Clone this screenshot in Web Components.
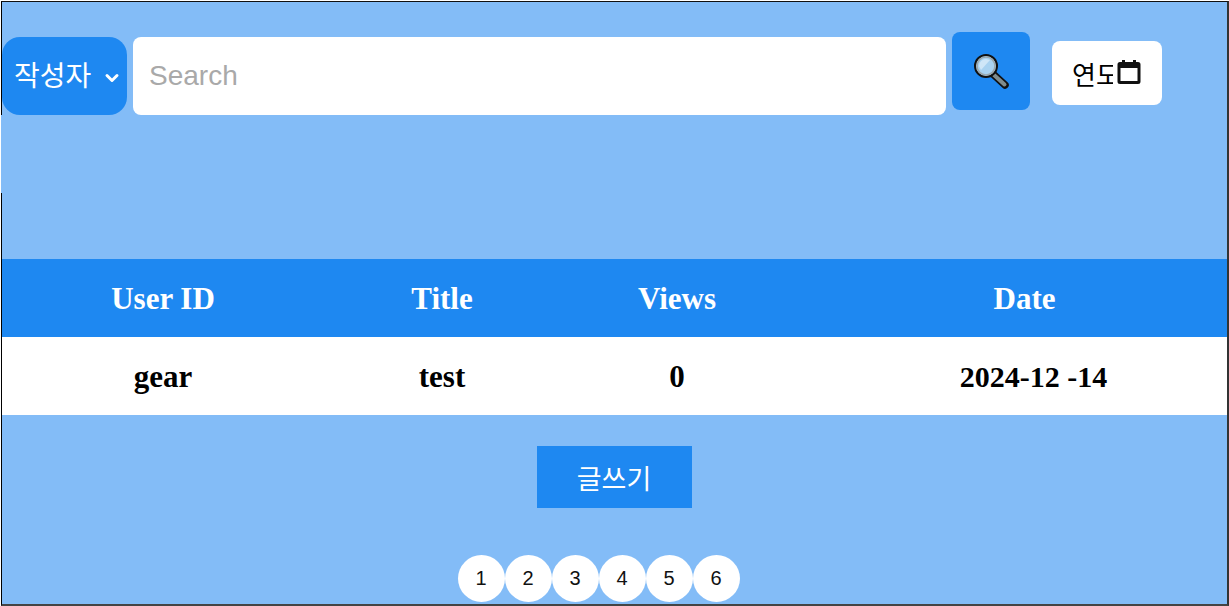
<!DOCTYPE html>
<html lang="ko">
<head>
<meta charset="utf-8">
<title>Board</title>
<style>
  html, body { margin: 0; padding: 0; background: #fff; }
  body { width: 1229px; height: 606px; overflow: hidden; font-family: "Liberation Sans", "Noto Sans CJK KR", sans-serif; }
</style>
</head>
<body>
<board-page>
  <search-bar slot="search"></search-bar>
  <board-table slot="table">
    <table-row head><span>User ID</span><span>Title</span><span>Views</span><span>Date</span></table-row>
    <table-row><span>gear</span><span>test</span><span>0</span><span>2024-12 -14</span></table-row>
  </board-table>
  <write-button slot="write">글쓰기</write-button>
  <page-numbers slot="pages" count="6"></page-numbers>
</board-page>

<script>
class BoardPage extends HTMLElement {
  constructor() {
    super();
    this.attachShadow({ mode: "open" });
    this.shadowRoot.innerHTML = `
      <style>
        :host {
          display: flex;
          flex-direction: column;
          box-sizing: border-box;
          position: relative;
          width: 1228px;
          height: 605px;
          margin: 1px 0 0 1px;
          border-top: 1px solid #111;
          border-left: 1px solid #000;
          border-right: 2px solid #333;
          border-bottom: 2px solid #444;
          background: #83bcf7;
        }
        /* the left edge line is broken in the reference */
        .gap {
          position: absolute;
          left: -1px;
          top: 113px;
          width: 1px;
          height: 78px;
          background: #83bcf7;
        }
        .search { display: block; height: 257px; }
        .write { display: flex; justify-content: center; padding: 31px 1px 0 0; }
        .pages { display: flex; justify-content: center; padding: 47px 32px 0 0; }
      </style>
      <div class="search"><slot name="search"></slot></div>
      <slot name="table"></slot>
      <div class="write"><slot name="write"></slot></div>
      <div class="pages"><slot name="pages"></slot></div>
      <div class="gap"></div>
    `;
  }
}

class SearchBar extends HTMLElement {
  constructor() {
    super();
    this.attachShadow({ mode: "open" });
    this.shadowRoot.innerHTML = `
      <style>
        :host { display: flex; align-items: flex-start; padding-top: 30px; }
        .select {
          box-sizing: border-box;
          display: flex;
          align-items: center;
          width: 125px;
          height: 78px;
          margin: 5px 0 0 0;
          padding: 0 0 4px 12px;
          border-radius: 18px;
          background: #1e88f1;
          color: #fff;
          font: 28px "Noto Sans CJK KR", sans-serif;
          white-space: nowrap;
        }
        .select svg { margin-left: 13px; margin-top: 7px; }
        .input {
          box-sizing: border-box;
          display: flex;
          align-items: center;
          width: 813px;
          height: 78px;
          margin: 5px 0 0 6px;
          padding-left: 16px;
          border-radius: 8px;
          background: #fff;
          color: #a9a9a9;
          font: 28px "Liberation Sans", sans-serif;
        }
        .go {
          display: flex;
          align-items: center;
          justify-content: center;
          width: 78px;
          height: 78px;
          margin-left: 6px;
          border-radius: 8px;
          background: #1e88f1;
        }
        .year {
          box-sizing: border-box;
          display: flex;
          align-items: center;
          width: 110px;
          height: 64px;
          margin: 9px 0 0 22px;
          padding-left: 20px;
          border-radius: 8px;
          background: #fff;
          color: #000;
          font: 26px "Noto Sans CJK KR", sans-serif;
        }
        .year .clip { display: block; width: 41px; overflow: hidden; white-space: nowrap; }
        .year svg { margin-left: 4px; margin-bottom: 2px; flex: none; }
      </style>
      <div class="select">작성자
        <svg width="16" height="16" viewBox="0 0 16 16" fill="none" stroke="#fff" stroke-width="3" stroke-linecap="round" stroke-linejoin="round"><path d="M3 5.500 8 10.500 13 5.500"/></svg>
      </div>
      <div class="input">Search</div>
      <div class="go">
        <svg width="38" height="38" viewBox="0 0 38 38">
          <path d="M21 22 33 33" stroke="#111" stroke-width="7.500" stroke-linecap="round"/>
          <path d="M22 23 32.500 32.500" stroke="#7f8c8d" stroke-width="4" stroke-linecap="round"/>
          <circle cx="14" cy="14" r="11" fill="#a9d2f0" stroke="#111" stroke-width="2"/>
          <circle cx="14" cy="14" r="9" fill="none" stroke="#9aa7ad" stroke-width="1.600"/>
          <path d="M7 14A7 7 0 0 1 14 7L18 8 9 18Z" fill="#cfe6f7"/>
        </svg>
      </div>
      <div class="year">
        <span class="clip">연도</span>
        <svg width="24" height="26" viewBox="0 0 24 26"><path fill="#111" d="M5 1h3v2h8V1h3v2h2a2.500 2.500 0 0 1 2.500 2.500v17a2.500 2.500 0 0 1-2.500 2.500H3a2.500 2.500 0 0 1-2.500-2.500v-17A2.500 2.500 0 0 1 3 3h2zM3.500 9v13h17V9z"/></svg>
      </div>
    `;
  }
}

class BoardTable extends HTMLElement {
  constructor() {
    super();
    this.attachShadow({ mode: "open" });
    this.shadowRoot.innerHTML = `
      <style>
        :host { display: block; }
      </style>
      <slot></slot>
    `;
  }
}

class TableRow extends HTMLElement {
  constructor() {
    super();
    this.attachShadow({ mode: "open" });
    this.shadowRoot.innerHTML = `
      <style>
        :host {
          display: grid;
          grid-template-columns: 322px 236px 234px 1fr;
          align-items: center;
          justify-items: center;
          box-sizing: border-box;
          height: 78px;
          padding-top: 2px;
          background: #fff;
          color: #000;
          font: bold 31px "Liberation Serif", serif;
          --last-pad: 46px;
          --last-size: 30px;
        }
        :host([head]) {
          background: #1e88f1;
          color: #fff;
          --last-pad: 28px;
          --last-size: 31px;
        }
        ::slotted(:last-child) { padding-left: var(--last-pad); font-size: var(--last-size); }
      </style>
      <slot></slot>
    `;
  }
}

class WriteButton extends HTMLElement {
  constructor() {
    super();
    this.attachShadow({ mode: "open" });
    this.shadowRoot.innerHTML = `
      <style>
        :host {
          display: flex;
          align-items: center;
          justify-content: center;
          box-sizing: border-box;
          width: 155px;
          height: 62px;
          background: #1e88f1;
          color: #fff;
          font: 27px "Noto Sans CJK KR", sans-serif;
        }
      </style>
      <slot></slot>
    `;
  }
}

class PageNumbers extends HTMLElement {
  constructor() {
    super();
    this.attachShadow({ mode: "open" });
    const count = Number(this.getAttribute("count")) || 1;
    let items = "";
    for (let i = 1; i <= count; i++) items += `<span>${i}</span>`;
    this.shadowRoot.innerHTML = `
      <style>
        :host { display: flex; }
        span {
          display: flex;
          align-items: center;
          justify-content: center;
          width: 47px;
          height: 47px;
          border-radius: 50%;
          background: #fff;
          color: #111;
          font: 20px "Liberation Sans", sans-serif;
        }
      </style>
      ${items}
    `;
  }
}

customElements.define("board-page", BoardPage);
customElements.define("search-bar", SearchBar);
customElements.define("board-table", BoardTable);
customElements.define("table-row", TableRow);
customElements.define("write-button", WriteButton);
customElements.define("page-numbers", PageNumbers);
</script>
</body>
</html>
